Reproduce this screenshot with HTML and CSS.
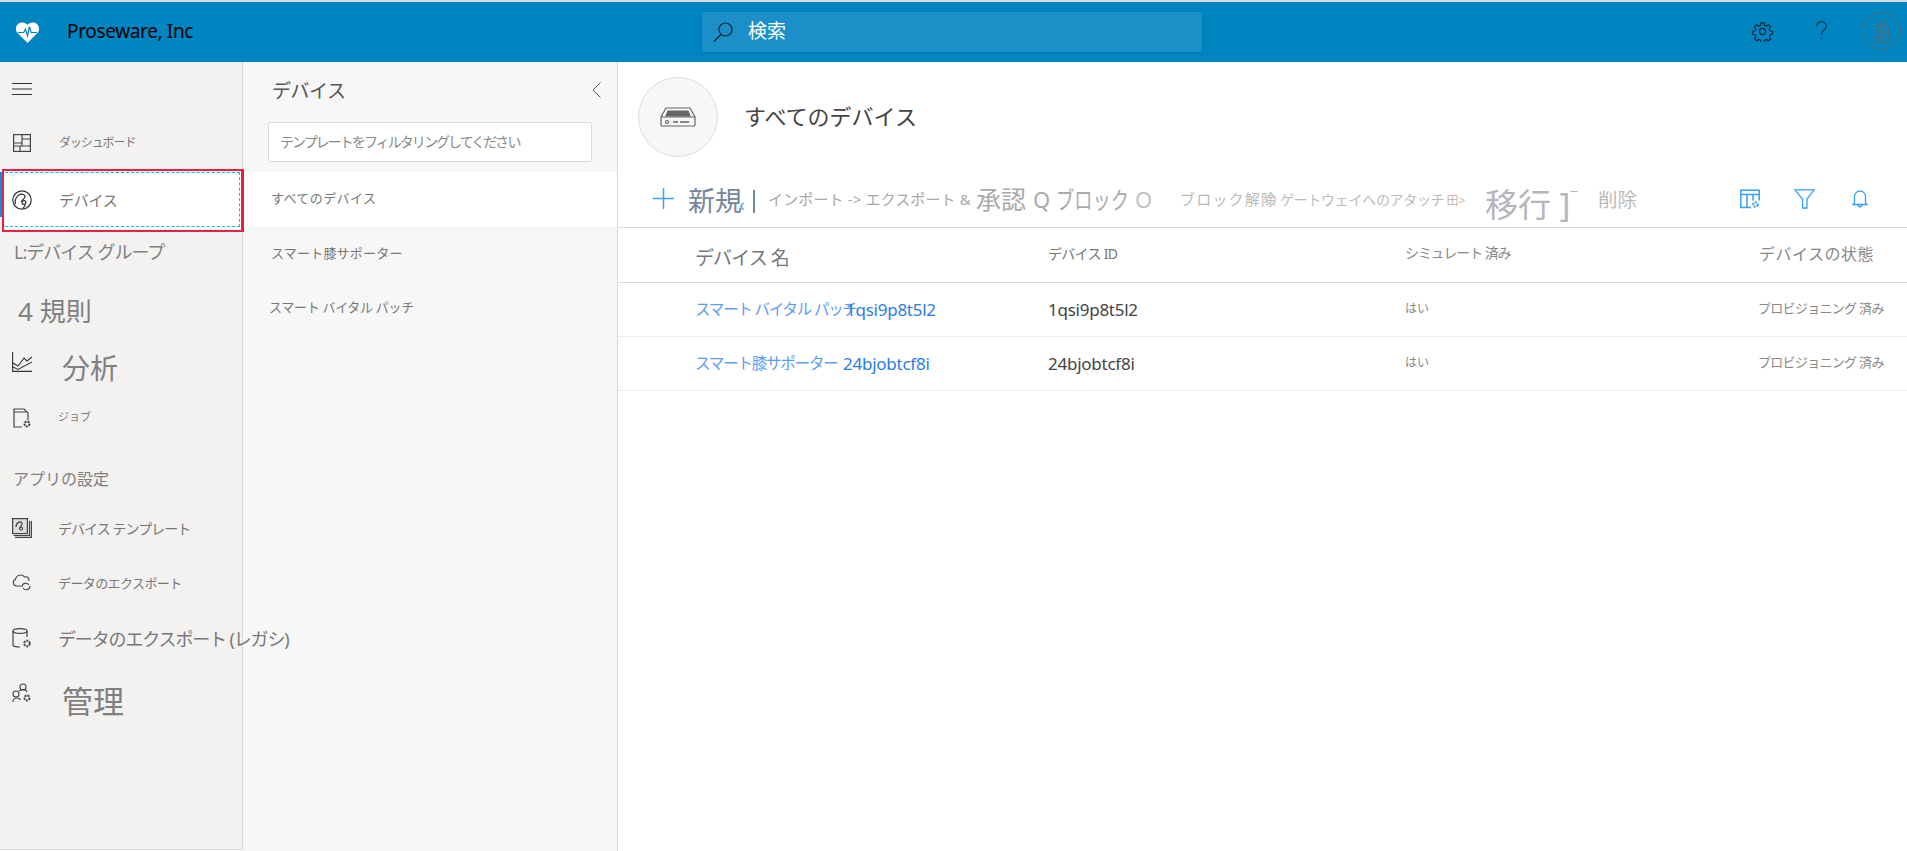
FILE: index.html
```html
<!DOCTYPE html>
<html lang="ja">
<head>
<meta charset="utf-8">
<title>Proseware, Inc</title>
<link rel="stylesheet" href="styles.css">
</head>
<body>
<div class="strip"></div>
<header class="top">
  <div class="brand">
    <svg class="logo" viewBox="0 0 26 24"><path d="M13 23 2.600 12.600C-.6 9 .9 2.600 6.600 1.600c2.700-.4 4.900.6 6.400 2.600 1.500-2 3.700-3 6.400-2.600 5.700 1 7.200 7.400 4 11z" fill="#fff"/><path d="M3 12h6l1.800-3.500 2.200 7 2-9.500 1.800 6h6" fill="none" stroke="#0085c0" stroke-width="1.300"/></svg>
    <span class="brand-name">Proseware, Inc</span>
  </div>
  <div class="search">
    <svg class="search-icon" viewBox="0 0 20 20"><circle cx="12.500" cy="7.500" r="6.500" fill="none" stroke="#04263a" stroke-width="1.200"/><path d="M8 12.500 1 19.500" stroke="#04263a" stroke-width="1.400"/></svg>
    <span class="search-text">検索</span>
  </div>
  <div class="top-actions">
    <svg class="gear" viewBox="0 0 24 24" fill="none" stroke="#04263a" stroke-width="1.400"><circle cx="12" cy="12" r="3.500"/><path d="M10 1.500h4l.6 3 2.300 1 2.600-1.700 2.800 2.800-1.700 2.600 1 2.300 3 .6v3.800l-2.900.6-1 2.300 1.700 2.600-2.800 2.800-2.600-1.700-2.300 1-.6 2.900h-4l-.6-2.900-2.300-1-2.600 1.700-2.800-2.800 1.700-2.600-1-2.300-2.900-.6v-3.800l2.900-.6 1-2.300-1.700-2.600 2.800-2.800 2.600 1.700 2.300-1z" transform="translate(1.200 .8) scale(.9)"/></svg>
    <svg class="help" viewBox="0 0 14 22" fill="none" stroke="#04263a" stroke-width="1.200"><path d="M2 6c0-3 2.300-5 5-5s5 2 5 4.800c0 2.200-1.200 3.300-2.800 4.500C7.600 11.500 7 12.500 7 15"/><path d="M7 18.500v1.500"/></svg>
    <div class="avatar">
      <svg viewBox="0 0 14 24" fill="none" stroke="#5f6a70" stroke-width="1.200"><rect x="1" y="7" width="12" height="16"/><circle cx="7" cy="13" r="2.500"/><path d="M3 20c0-3 8-3 8 0M4 1l2 6M10 1 8 7"/></svg>
    </div>
  </div>
</header>
<div class="shell">
  <aside class="rail">
    <div class="rail-item h-burger">
      <svg class="ico" viewBox="0 0 20 12" stroke="#333" stroke-width="1"><path d="M0 .5h20M0 6h20M0 11.500h20"/></svg>
    </div>
    <div class="rail-item h-dash">
      <svg class="ico dash" viewBox="0 0 18 18" fill="none" stroke="#444" stroke-width="1.200"><rect x=".6" y=".6" width="16.800" height="16.800"/><path d="M9 .6v11.400M.6 9H9M9 5h8.400M.6 12h16.800M7 12v5.400"/></svg>
      <span class="t-dash">ダッシュボード</span>
    </div>
    <div class="rail-item selected">
      <div class="selected-inner">
        <div class="selected-dash">
          <svg class="ico" viewBox="0 0 20 20" fill="none" stroke="#333" stroke-width="1.200"><circle cx="10" cy="10" r="9.200"/><path d="M3.500 14C2 7 8 3 11.500 4.500c3 1.500 1 4-1 5.500-1 1-1 1.500-1 2"/><circle cx="12" cy="12.500" r="1.900"/><path d="M13 15c0 1.500-1 2.500-2.500 3.500"/></svg>
          <span class="t-dev">デバイス</span>
        </div>
      </div>
    </div>
    <div class="rail-item h-group"><span class="t-group">L:デバイス グループ</span></div>
    <div class="rail-item h-rules"><span class="t-rules">4 規則</span></div>
    <div class="rail-item h-ana">
      <svg class="ico up" viewBox="0 0 20 20" fill="none" stroke="#333" stroke-width="1.100"><path d="M.6 0v19.400H20M1 15l5 2.500 14-7.500M1 11l5 3 6-8 3 3 5-4"/></svg>
      <span class="t-ana">分析</span>
    </div>
    <div class="rail-item h-job">
      <svg class="ico" viewBox="0 0 18 20" fill="none" stroke="#444" stroke-width="1.200"><path d="M1 1h10l4 4v7M1 1v18h8M1 4h12"/><circle cx="14" cy="16" r="2.500" stroke-width="2" stroke-dasharray="2 1"/></svg>
      <span class="t-job">ジョブ</span>
    </div>
    <div class="rail-item h-app"><span class="t-app">アプリの設定</span></div>
    <div class="rail-item h-tpl">
      <svg class="ico" viewBox="0 0 20 20" fill="none" stroke="#444" stroke-width="1.200"><rect x=".6" y=".6" width="14.800" height="15" fill="#ddd"/><path d="M3 19.400h16.400V3M1.500 17.500h16V3"/><path d="M4 9c0-5 5-6 6-4s-2 3-1.500 4.500"/><circle cx="9" cy="10.500" r="1.500"/></svg>
      <span class="t-tpl">デバイス テンプレート</span>
    </div>
    <div class="rail-item h-exp">
      <svg class="ico" viewBox="0 0 20 18" fill="none" stroke="#444" stroke-width="1.100"><path d="M9 13H4.500C1 13 0 7.500 3.500 6.500 4 2 10 .5 12.500 4c3-1 5 1 4.500 4"/><path d="M10 14c0-4 5-5 7-2M18 13c0 4-5 5-7 2"/></svg>
      <span class="t-exp">データのエクスポート</span>
    </div>
    <div class="rail-item h-leg">
      <svg class="ico" viewBox="0 0 20 20" fill="none" stroke="#444" stroke-width="1.200"><ellipse cx="8" cy="3" rx="7" ry="2.400"/><path d="M1 3v14c0 1.500 3 2 7 2M15 3v6"/><circle cx="15" cy="15.500" r="2.800" stroke-width="2" stroke-dasharray="2 1"/></svg>
      <span class="t-leg">データのエクスポート (レガシ)</span>
    </div>
    <div class="rail-item h-adm">
      <svg class="ico up" viewBox="0 0 20 20" fill="none" stroke="#444" stroke-width="1.100"><circle cx="11" cy="4" r="3"/><circle cx="4" cy="11" r="3"/><path d="M1 19c0-5 6-5 7.500-2M7 8c2-2 7-2 8 1"/><circle cx="15" cy="15" r="2.500" stroke-width="2" stroke-dasharray="2 1"/></svg>
      <span class="t-adm">管理</span>
    </div>
  </aside>

  <section class="panel">
    <div class="panel-head">
      <span class="panel-title">デバイス</span>
      <svg class="chev" viewBox="0 0 9 16" fill="none" stroke="#44546a" stroke-width="1"><path d="M8.500.5 1 8l7.500 7.500"/></svg>
    </div>
    <div class="filter"><span>テンプレートをフィルタリングしてください</span></div>
    <div class="panel-row active"><span class="p1">すべてのデバイス</span></div>
    <div class="panel-row"><span class="p2">スマート膝サポーター</span></div>
    <div class="panel-row"><span class="p3">スマート バイタル パッチ</span></div>
  </section>

  <main class="main">
    <div class="page-head">
      <div class="badge">
        <svg viewBox="0 0 36 20" fill="none" stroke="#666" stroke-width="1.200"><path d="M1 10 6 1h24l5 9v8a1 1 0 0 1-1 1H2a1 1 0 0 1-1-1z"/><path d="M6 9l2-5h20l2 5z" fill="#666"/><path d="M1 10h34"/><circle cx="7" cy="15" r="1.500"/><path d="M13 15h5M20 15h9" stroke-width="1.600"/></svg>
      </div>
      <h1 class="page-title">すべてのデバイス</h1>
    </div>
    <div class="toolbar">
      <svg class="plus" viewBox="0 0 21 21" stroke="#3ba4f5" stroke-width="1.500"><path d="M0 10.500h21M10.500 0v21"/></svg>
      <span class="b-new">新規<span class="b-arrow">‹</span></span>
      <span class="b-bar"></span>
      <span class="b-imp">インポート -&gt; エクスポート &amp;</span>
      <span class="b-app">承認</span>
      <span class="b-q">Q</span>
      <span class="b-blk">ブロック</span>
      <span class="b-o">O</span>
      <span class="b-unb">ブロック解除<span class="b-ring">O</span></span>
      <span class="b-att">ゲートウェイへのアタッチ<span class="b-grid">田&gt;</span></span>
      <span class="b-mov">移行 ]<span class="b-mark">¯</span></span>
      <span class="b-del">削除</span>
      <svg class="t-ico" viewBox="0 0 20 19" fill="none" stroke="#35a0f5" stroke-width="1.500"><path d="M11 18H.8V.8h18.400V11M.8 5h18.400M7 5v13M13 5v6"/><circle cx="15.500" cy="15" r="2.300" stroke-width="2" stroke-dasharray="2 1"/></svg>
      <svg class="t-ico fun" viewBox="0 0 21 20" fill="none" stroke="#35a0f5" stroke-width="1.300"><path d="M.8.8h19.400L13 10v9H8.500v-9z"/></svg>
      <svg class="t-ico bel" viewBox="0 0 16 18" fill="none" stroke="#35a0f5" stroke-width="1.300"><path d="M1 14.500h14l-1.500-2V6.500a5.500 5.500 0 0 0-11 0v6zM6 14.500c0 3 4 3 4 0"/></svg>
    </div>
    <div class="table">
      <div class="tr th">
        <span class="h-name">デバイス 名</span>
        <span class="h-id">デバイス ID</span>
        <span class="h-sim">シミュレート 済み</span>
        <span class="h-state">デバイスの状態</span>
      </div>
      <div class="tr">
        <span class="name"><span class="name-ja w1">スマート バイタル パッチ</span><span class="name-id">1qsi9p8t5l2</span></span>
        <span class="did">1qsi9p8t5l2</span>
        <span class="sim">はい</span>
        <span class="state">プロビジョニング 済み</span>
      </div>
      <div class="tr">
        <span class="name"><span class="name-ja w2">スマート膝サポーター</span><span class="name-id">24bjobtcf8i</span></span>
        <span class="did">24bjobtcf8i</span>
        <span class="sim">はい</span>
        <span class="state">プロビジョニング 済み</span>
      </div>
    </div>
  </main>
</div>
</body>
</html>
```
FILE: styles.css
```css
* { box-sizing: border-box; }
html, body { margin: 0; height: 851px; overflow: hidden; }
body {
  background: #fff;
  font-family: "Noto Sans", "Noto Sans CJK JP", sans-serif;
  color: #777;
}
span { white-space: nowrap; }

.strip { height: 2px; background: #d9dadb; }
.top {
  height: 60px;
  background: #0085c0;
  display: grid;
  grid-template-columns: 702px 500px 1fr;
  align-items: center;
}
.brand { display: flex; align-items: center; padding-left: 15px; }
.logo { width: 25px; height: 23px; margin-right: 27px; }
.brand-name { font-size: 19px; color: #000; letter-spacing: -.35px; margin-top: -2px; }
.search {
  height: 40px;
  background: #1b90c8;
  border-radius: 2px;
  box-shadow: 0 1px 3px rgba(0,0,0,.12);
  display: flex;
  align-items: center;
  padding-left: 11px;
  color: #fff;
  font-size: 19px;
}
.search-icon { width: 20px; height: 20px; margin-right: 15px; }
.search-text { margin-top: -4px; }
.top-actions { display: flex; align-items: center; padding-left: 550px; margin-top: -2px; }
.gear { width: 21px; height: 21px; }
.help { width: 13px; height: 22px; margin-left: 42px; }
.avatar {
  width: 38px; height: 38px; margin-left: 35px;
  border: 1px solid #4a6a7a; border-radius: 50%;
  display: flex; align-items: center; justify-content: center;
}
.avatar svg { width: 14px; height: 24px; }

.shell {
  display: grid;
  grid-template-columns: 243px 375px 1fr;
  height: 789px;
}

.rail {
  background: #f3f2f1;
  border-right: 1px solid #d8d8d8;
  border-bottom: 1px solid #d8d8d8;
  height: 788px;
  position: relative;
  z-index: 1;
}
.rail-item { display: flex; align-items: center; padding-left: 12px; }
.ico { width: 20px; height: 20px; margin-right: 26px; flex: none; }
.ico.up { margin-top: -12px; }
.ico.dash { width: 18px; height: 18px; margin: 0 28px 0 1px; }
.h-burger { height: 54px; }
.h-burger .ico { height: 12px; }
.h-dash { height: 53px; }
.h-group { height: 37px; }
.h-rules { height: 82px; }
.h-ana { height: 34px; }
.h-job { height: 65px; }
.h-app { height: 55px; }
.h-tpl { height: 46px; }
.h-exp { height: 62px; }
.h-leg { height: 50px; }
.h-adm { height: 72px; }

.t-dash { font-size: 12px; letter-spacing: -1.100px; margin-top: -2px; }
.t-dev { font-size: 15px; letter-spacing: -.3px; margin-left: 1px; }
.t-group { font-size: 18px; letter-spacing: -1px; margin-left: 2px; color: #808080; }
.t-rules { font-size: 26px; margin-left: 6px; color: #808080; }
.t-ana { font-size: 28px; margin-left: 4px; line-height: 1; color: #808080; }
.t-job { font-size: 11px; margin-top: -4px; }
.t-app { font-size: 16px; margin-left: 1px; letter-spacing: 0; color: #808080; }
.t-tpl { font-size: 14px; letter-spacing: -.95px; }
.t-exp { font-size: 13px; letter-spacing: -.6px; }
.t-leg { font-size: 18px; letter-spacing: -1.150px; position: relative; z-index: 2; }
.t-adm { font-size: 31px; margin-left: 4px; color: #808080; }

.selected {
  height: 63px;
  padding-left: 2px;
  position: relative;
}
.selected::before {
  content: "";
  position: absolute;
  left: 0; top: 3px;
  width: 2px; height: 45px;
  background: #0a8fe0;
}
.selected-inner {
  flex: none;
  width: 242px;
  height: 63px;
  background: #fff;
  border: solid #ee1d47;
  border-width: 2px 3px 2px 2px;
  padding: 1px 1px 3px 1px;
}
.selected-dash {
  height: 100%;
  border: 1px dashed #17b4f0;
  border-width: 1px 1px 1px 0;
  display: flex;
  align-items: center;
  padding-left: 7px;
}

.panel { background: #f7f7f7; border-right: 1px solid #d8d8d8; }
.panel-head {
  height: 60px;
  display: flex;
  align-items: center;
  justify-content: space-between;
  padding: 0 16px 4px 29px;
}
.panel-title { font-size: 19px; color: #555; letter-spacing: -.5px; }
.chev { width: 9px; height: 16px; }
.filter {
  width: 324px; height: 40px;
  margin-left: 25px;
  background: #fff;
  border: 1px solid #d9d9d9;
  border-radius: 2px;
  display: flex;
  align-items: center;
  padding: 0 0 3px 11px;
  font-size: 14px;
  letter-spacing: -1.950px;
  color: #888;
}
.panel-row {
  height: 55px;
  display: flex;
  align-items: center;
  padding: 0 0 5px 28px;
  font-size: 13px;
  color: #777;
}
.panel-row.active { background: #fff; margin-top: 10px; }
.p1 { letter-spacing: .4px; }
.p2 { letter-spacing: .2px; }
.p3 { letter-spacing: -.3px; margin-left: -2px; margin-top: -1px; }

.main { min-width: 0; }
.page-head {
  height: 108px;
  padding: 15px 0 0 20px;
  display: flex;
  align-items: flex-start;
}
.badge {
  width: 80px; height: 80px;
  border-radius: 50%;
  background: #f7f7f7;
  border: 1px solid #ddd;
  display: flex; align-items: center; justify-content: center;
  flex: none;
}
.badge svg { width: 36px; height: 20px; }
.page-title {
  margin: 24px 0 0 26px;
  font-size: 22px;
  font-weight: 400;
  line-height: 30px;
  color: #444;
}
.toolbar {
  height: 58px;
  border-bottom: 1px solid #d9d9d9;
  display: grid;
  grid-template-columns: 35px 65px 15px 208px 59px 21px 79px 45px 100px 205px 113px 142px 54px 58px 1fr;
  align-items: center;
  padding-left: 35px;
  color: #aaa;
  font-size: 14px;
}
.plus { width: 21px; height: 21px; }
.b-new { font-size: 27px; color: #75879c; line-height: 1; margin-top: 4px; }
.b-arrow { font-size: 18px; color: #3ba4f5; margin-left: -3px; }
.b-bar { width: 2px; height: 23px; background: #75879c; margin-top: 6px; }
.b-imp { font-size: 15px; letter-spacing: .13px; color: #a9a9a9; }
.b-app { font-size: 25px; color: #aaa; line-height: 1; margin-top: 2px; }
.b-q { font-size: 22px; color: #aaa; margin-left: -2px; }
.b-blk {
  display: inline-block;
  font-size: 24px;
  color: #aaa;
  line-height: 1;
  margin-top: 2px;
  transform: scaleX(.76);
  transform-origin: left center;
}
.b-o { font-size: 22px; color: #c2c2c2; }
.b-unb { font-size: 15px; letter-spacing: 1.200px; color: #bbb; }
.b-ring { font-size: 15px; margin-left: -12px; letter-spacing: 0; color: #ccc; }
.b-att { font-size: 14px; letter-spacing: -.3px; color: #bbb; }
.b-grid { font-size: 12px; letter-spacing: 0; color: #c9b9ad; margin-left: 2px; }
.b-mov { font-size: 33px; color: #b7b5bc; line-height: 1; margin-top: 12px; }
.b-mark { font-size: 14px; vertical-align: 14px; }
.b-del { font-size: 19.500px; color: #bbb; }
.t-ico { height: 20px; width: 20px; }
.t-ico.fun { width: 21px; }
.t-ico.bel { width: 16px; }

.tr {
  display: grid;
  grid-template-columns: 352px 357px 354px 1fr;
  align-items: center;
  padding-left: 78px;
  height: 54px;
  border-bottom: 1px solid #eee;
}
.th { height: 55px; border-bottom: 1px solid #d9d9d9; }
.h-name { font-size: 19px; color: #777; letter-spacing: -.9px; margin: 3px 0 0 -1px; }
.h-id { font-size: 14px; color: #777; letter-spacing: -.7px; margin-top: -5px; }
.h-sim { font-size: 14px; color: #888; letter-spacing: -1.100px; margin-top: -6px; }
.h-state { font-size: 16px; color: #888; letter-spacing: .5px; margin-top: -4px; }
.name { display: flex; align-items: center; margin-left: -1px; }
.name-ja { font-size: 15.500px; color: #5b9cf5; letter-spacing: -1.200px; margin-top: -2px; }
.w1 { width: 151px; }
.w2 { width: 148px; }
.name-id { font-size: 17px; color: #2a7de1; letter-spacing: -.25px; }
.did { font-size: 17px; color: #444; letter-spacing: -.25px; }
.sim { font-size: 12px; color: #888; margin-top: -4px; }
.state { font-size: 13px; color: #888; letter-spacing: -.7px; margin-top: -4px; margin-left: -1px; }
```
